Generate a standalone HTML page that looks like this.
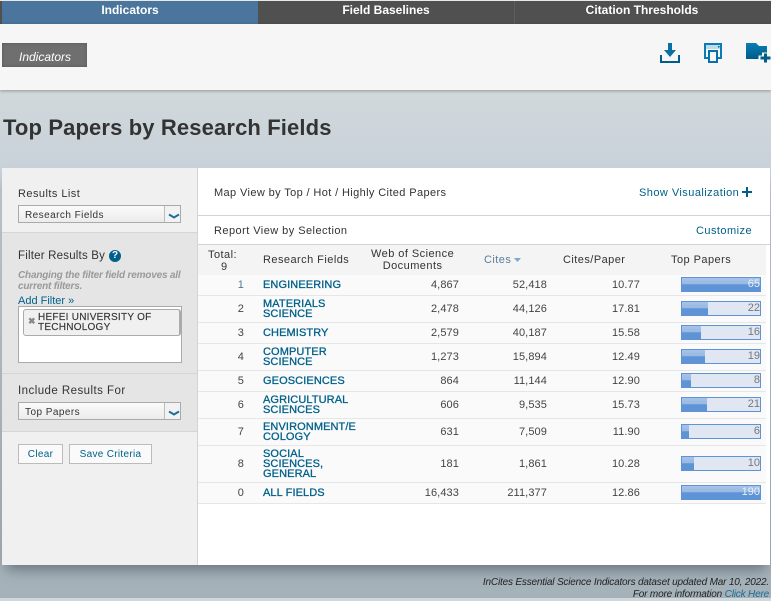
<!DOCTYPE html>
<html><head><meta charset="utf-8"><style>
html,body{margin:0;padding:0}
body{width:771px;height:598px;position:relative;overflow:hidden;font-family:"Liberation Sans",sans-serif;font-size:11px;color:#333;background:linear-gradient(#d0d8db 0,#d0d8db 93px,#c9d2da 168px,#a4b1b9 598px)}
div,span,svg{position:absolute;box-sizing:border-box}
.t{white-space:nowrap;line-height:12px;margin-top:1px}
.h{letter-spacing:.45px;color:#333}
.f{left:263px;color:#00608a;line-height:10px;letter-spacing:.1px;-webkit-text-stroke:.3px #00608a;white-space:nowrap;margin-top:1px}
.n{text-align:right;white-space:nowrap;line-height:12px;color:#444;letter-spacing:.1px;margin-top:1px}
.r{left:198px;width:568px;background:#fafafa;border-bottom:1px solid #e6e6e6}
.b{left:681px;width:80px;height:15px;background:#e0e6f2;border:1px solid #5e93d5}
.b i{position:absolute;left:0;top:0;height:13px;background:linear-gradient(#a7c3e8 0,#98b9e4 45%,#5e93d5 52%,#5e93d5 100%)}
.b b{position:absolute;right:0;top:0;line-height:13px;font-weight:normal;font-size:11px;color:#777}
.b.w b{color:#e8f0fa}
.sel{left:18px;width:163px;height:18px;border:1px solid #aaa;background:linear-gradient(#fafafa,#ececec)}
.sel span{left:6px;top:4px;line-height:12px;font-size:10px;letter-spacing:.45px;color:#333;white-space:nowrap}
.sel em{position:absolute;right:0;top:0;width:15px;height:16px;border-left:1px solid #bbb;background:#f2f2f2}
.btn{height:20px;border:1px solid #bbb;background:#fafafa;color:#00608a;line-height:20px;font-size:10px;text-align:center;letter-spacing:.3px;top:444px}
</style></head><body>
<div style="left:0;top:0;width:771px;height:1px;background:#e8e8e8"></div>
<div style="left:0;top:1px;width:771px;height:23px;background:#505050"></div>
<div style="left:2px;top:1px;width:256px;height:23px;background:#4a759c"></div>
<div style="left:514px;top:1px;width:1px;height:23px;background:#5e5e5e"></div>
<div class="t" style="left:2px;width:256px;top:3px;text-align:center;color:#fff;font-weight:bold;font-size:12px">Indicators</div>
<div class="t" style="left:258px;width:256px;top:3px;text-align:center;color:#fff;font-weight:bold;font-size:12px">Field Baselines</div>
<div class="t" style="left:514px;width:256px;top:3px;text-align:center;color:#fff;font-weight:bold;font-size:12px">Citation Thresholds</div>

<div style="left:0;top:24px;width:771px;height:66px;background:#f6f6f6;box-shadow:0 1px 3px rgba(0,0,0,.3)"></div>
<div style="left:2px;top:43px;width:85px;height:24px;background:#6f6f6f;box-shadow:inset 0 0 3px #555"></div>
<div class="t" style="left:19px;top:50px;color:#fff;font-style:italic;font-size:12px">Indicators</div>

<svg style="left:655px;top:40px" width="116" height="26" viewBox="655 40 116 26">
<defs><linearGradient id="g" x1="0" y1="0" x2="0" y2="1"><stop offset="0" stop-color="#0a7cb5"/><stop offset="1" stop-color="#005c88"/></linearGradient></defs>
<path d="M668 43h4v7h4l-6 7-6-7h4z" fill="#0a6fa3"/>
<path d="M660 55h2v6h16v-6h2v8h-20z" fill="#005c88"/>
<path d="M704 43h18v16h-4v-2h2V45h-14v12h2v2h-4z" fill="#0a7cb5"/>
<path d="M706 45h14v4h-14z" fill="#bcdcec"/>
<path d="M718 46h1.5v1.5H718z" fill="#005c88"/>
<path d="M708 50h10v13h-10z M710 52v9h6v-9z" fill="#0a70a5" fill-rule="evenodd"/>
<path d="M746 43h10l3 3h8v6.5h-5v3h-3.5v3.5H746z" fill="url(#g)"/>
<path d="M764 53.5h3v3h3.5v3H767v3h-3v-3h-3.5v-3h3.5z" fill="#005c88"/>
</svg>

<div class="t" style="left:3px;top:115px;margin-top:0;font-size:22px;line-height:26px;font-weight:bold;color:#333;letter-spacing:.13px">Top Papers by Research Fields</div>

<div style="left:2px;top:168px;width:768px;height:397px;background:#fff;box-shadow:0 9px 12px -4px rgba(50,60,70,.5)"></div>

<!-- sidebar -->
<div style="left:2px;top:168px;width:195px;height:397px;background:#f0f0f0;border-right:0"></div>
<div style="left:197px;top:168px;width:1px;height:397px;background:#d4d4d4"></div>
<div style="left:2px;top:232px;width:195px;height:142px;background:#e5e5e5;border-top:1px solid #d5d5d5;border-bottom:1px solid #d5d5d5"></div>
<div style="left:2px;top:373px;width:195px;height:59px;background:#e5e5e5;border-top:1px solid #d5d5d5;border-bottom:1px solid #d5d5d5"></div>

<div class="t h" style="left:18px;top:187px">Results List</div>
<div class="sel" style="top:205px"><span>Research Fields</span><em></em></div>
<svg style="left:168px;top:213px" width="12" height="7" viewBox="0 0 12 7"><path d="M1 1.5l5 3 5-3" fill="none" stroke="#1a6f9c" stroke-width="2"/></svg>

<div class="t h" style="left:18px;top:249px;font-size:11.5px;letter-spacing:.2px">Filter Results By</div>
<div style="left:109px;top:250px;width:12px;height:12px;border-radius:50%;background:#00608a;color:#fff;font-weight:bold;font-size:10px;line-height:12px;text-align:center">?</div>
<div class="t" style="left:18px;top:269px;font-style:italic;color:#999;font-size:10px;line-height:11px;font-weight:bold;letter-spacing:-.19px">Changing the filter field removes all<br>current filters.</div>
<div class="t" style="left:18px;top:294px;color:#00608a;letter-spacing:0">Add Filter »</div>
<div style="left:18px;top:306px;width:164px;height:57px;background:#fff;border:1px solid #aaa"></div>
<div style="left:23px;top:309px;width:158px;height:27px;border:1px solid #aaa;border-right:2px solid #aaa;border-radius:3px;background:#f0f0f0"></div>
<div class="t" style="left:28px;top:315px;font-size:9px;font-weight:bold;color:#888;line-height:10px">✖</div>
<div class="t" style="left:38px;top:312px;line-height:10px;font-size:10px;letter-spacing:.25px;color:#333;-webkit-text-stroke:.15px #333">HEFEI UNIVERSITY OF<br>TECHNOLOGY</div>

<div class="t h" style="left:18px;top:384px;font-size:11.5px">Include Results For</div>
<div class="sel" style="top:402px"><span>Top Papers</span><em></em></div>
<svg style="left:168px;top:410px" width="12" height="7" viewBox="0 0 12 7"><path d="M1 1.5l5 3 5-3" fill="none" stroke="#1a6f9c" stroke-width="2"/></svg>

<div class="btn" style="left:18px;width:45px">Clear</div>
<div class="btn" style="left:69px;width:83px">Save Criteria</div>

<!-- main -->
<div class="t h" style="left:214px;top:186px;letter-spacing:.38px">Map View by Top / Hot / Highly Cited Papers</div>
<div class="t" style="left:639px;top:186px;color:#00608a;letter-spacing:.45px">Show Visualization</div>
<svg style="left:742px;top:187px" width="10" height="10" viewBox="0 0 10 10"><path d="M4 0h2v4h4v2H6v4H4V6H0V4h4z" fill="#00608a"/></svg>
<div style="left:198px;top:215px;width:572px;height:1px;background:#d0d4d6"></div>
<div class="t h" style="left:214px;top:224px">Report View by Selection</div>
<div class="t" style="left:696px;top:224px;color:#00608a;letter-spacing:.45px">Customize</div>
<div style="left:198px;top:244px;width:572px;height:1px;background:#d0d4d6"></div>

<div style="left:198px;top:245px;width:568px;height:30px;background:#f4f4f4"></div>
<div class="t h" style="left:208px;top:248px;text-align:center">Total:<br>&nbsp;9</div>
<div class="t h" style="left:263px;top:253px">Research Fields</div>
<div class="t h" style="left:371px;top:247px;line-height:12px;text-align:center">Web of Science<br>Documents</div>
<div class="t h" style="left:484px;top:253px;color:#5b7f99">Cites</div>
<svg style="left:514px;top:258px" width="7" height="4" viewBox="0 0 7 4"><path d="M0 0h7L3.5 4z" fill="#7fa6d6"/></svg>
<div class="t h" style="left:563px;top:253px">Cites/Paper</div>
<div class="t h" style="left:671px;top:253px">Top Papers</div>

<div class="r" style="top:275px;height:21px"></div>
<div class="r" style="top:296px;height:27px"></div>
<div class="r" style="top:323px;height:21px"></div>
<div class="r" style="top:344px;height:27px"></div>
<div class="r" style="top:371px;height:21px"></div>
<div class="r" style="top:392px;height:27px"></div>
<div class="r" style="top:419px;height:27px"></div>
<div class="r" style="top:446px;height:37px"></div>
<div class="r" style="top:483px;height:21px"></div>

<div class="n" style="left:214px;width:30px;top:278px;color:#4a7a96">1</div>
<div class="f" style="top:279px">ENGINEERING</div>
<div class="n" style="left:389px;width:70px;top:278px">4,867</div>
<div class="n" style="left:477px;width:70px;top:278px">52,418</div>
<div class="n" style="left:570px;width:70px;top:278px">10.77</div>
<div class="b w" style="top:277px"><i style="width:78px"></i><b>65</b></div>

<div class="n" style="left:214px;width:30px;top:302px">2</div>
<div class="f" style="top:298px">MATERIALS<br>SCIENCE</div>
<div class="n" style="left:389px;width:70px;top:302px">2,478</div>
<div class="n" style="left:477px;width:70px;top:302px">44,126</div>
<div class="n" style="left:570px;width:70px;top:302px">17.81</div>
<div class="b" style="top:301px"><i style="width:26px"></i><b>22</b></div>

<div class="n" style="left:214px;width:30px;top:326px">3</div>
<div class="f" style="top:327px">CHEMISTRY</div>
<div class="n" style="left:389px;width:70px;top:326px">2,579</div>
<div class="n" style="left:477px;width:70px;top:326px">40,187</div>
<div class="n" style="left:570px;width:70px;top:326px">15.58</div>
<div class="b" style="top:325px"><i style="width:19px"></i><b>16</b></div>

<div class="n" style="left:214px;width:30px;top:350px">4</div>
<div class="f" style="top:346px">COMPUTER<br>SCIENCE</div>
<div class="n" style="left:389px;width:70px;top:350px">1,273</div>
<div class="n" style="left:477px;width:70px;top:350px">15,894</div>
<div class="n" style="left:570px;width:70px;top:350px">12.49</div>
<div class="b" style="top:349px"><i style="width:23px"></i><b>19</b></div>

<div class="n" style="left:214px;width:30px;top:374px">5</div>
<div class="f" style="top:375px">GEOSCIENCES</div>
<div class="n" style="left:389px;width:70px;top:374px">864</div>
<div class="n" style="left:477px;width:70px;top:374px">11,144</div>
<div class="n" style="left:570px;width:70px;top:374px">12.90</div>
<div class="b" style="top:373px"><i style="width:9px"></i><b>8</b></div>

<div class="n" style="left:214px;width:30px;top:398px">6</div>
<div class="f" style="top:394px">AGRICULTURAL<br>SCIENCES</div>
<div class="n" style="left:389px;width:70px;top:398px">606</div>
<div class="n" style="left:477px;width:70px;top:398px">9,535</div>
<div class="n" style="left:570px;width:70px;top:398px">15.73</div>
<div class="b" style="top:397px"><i style="width:25px"></i><b>21</b></div>

<div class="n" style="left:214px;width:30px;top:425px">7</div>
<div class="f" style="top:421px">ENVIRONMENT/E<br>COLOGY</div>
<div class="n" style="left:389px;width:70px;top:425px">631</div>
<div class="n" style="left:477px;width:70px;top:425px">7,509</div>
<div class="n" style="left:570px;width:70px;top:425px">11.90</div>
<div class="b" style="top:424px"><i style="width:7px"></i><b>6</b></div>

<div class="n" style="left:214px;width:30px;top:457px">8</div>
<div class="f" style="top:448px">SOCIAL<br>SCIENCES,<br>GENERAL</div>
<div class="n" style="left:389px;width:70px;top:457px">181</div>
<div class="n" style="left:477px;width:70px;top:457px">1,861</div>
<div class="n" style="left:570px;width:70px;top:457px">10.28</div>
<div class="b" style="top:456px"><i style="width:12px"></i><b>10</b></div>

<div class="n" style="left:214px;width:30px;top:486px">0</div>
<div class="f" style="top:487px">ALL FIELDS</div>
<div class="n" style="left:389px;width:70px;top:486px">16,433</div>
<div class="n" style="left:477px;width:70px;top:486px">211,377</div>
<div class="n" style="left:570px;width:70px;top:486px">12.86</div>
<div class="b w" style="top:485px"><i style="width:78px"></i><b>190</b></div>

<div class="t" style="right:2px;top:577px;margin-top:0;font-style:italic;font-size:10px;letter-spacing:-.18px;color:#222;text-align:right;line-height:12px">InCites Essential Science Indicators dataset updated Mar 10, 2022.<br>For more information <span style="position:static;color:#1c6c96">Click Here</span></div>
</body></html>
